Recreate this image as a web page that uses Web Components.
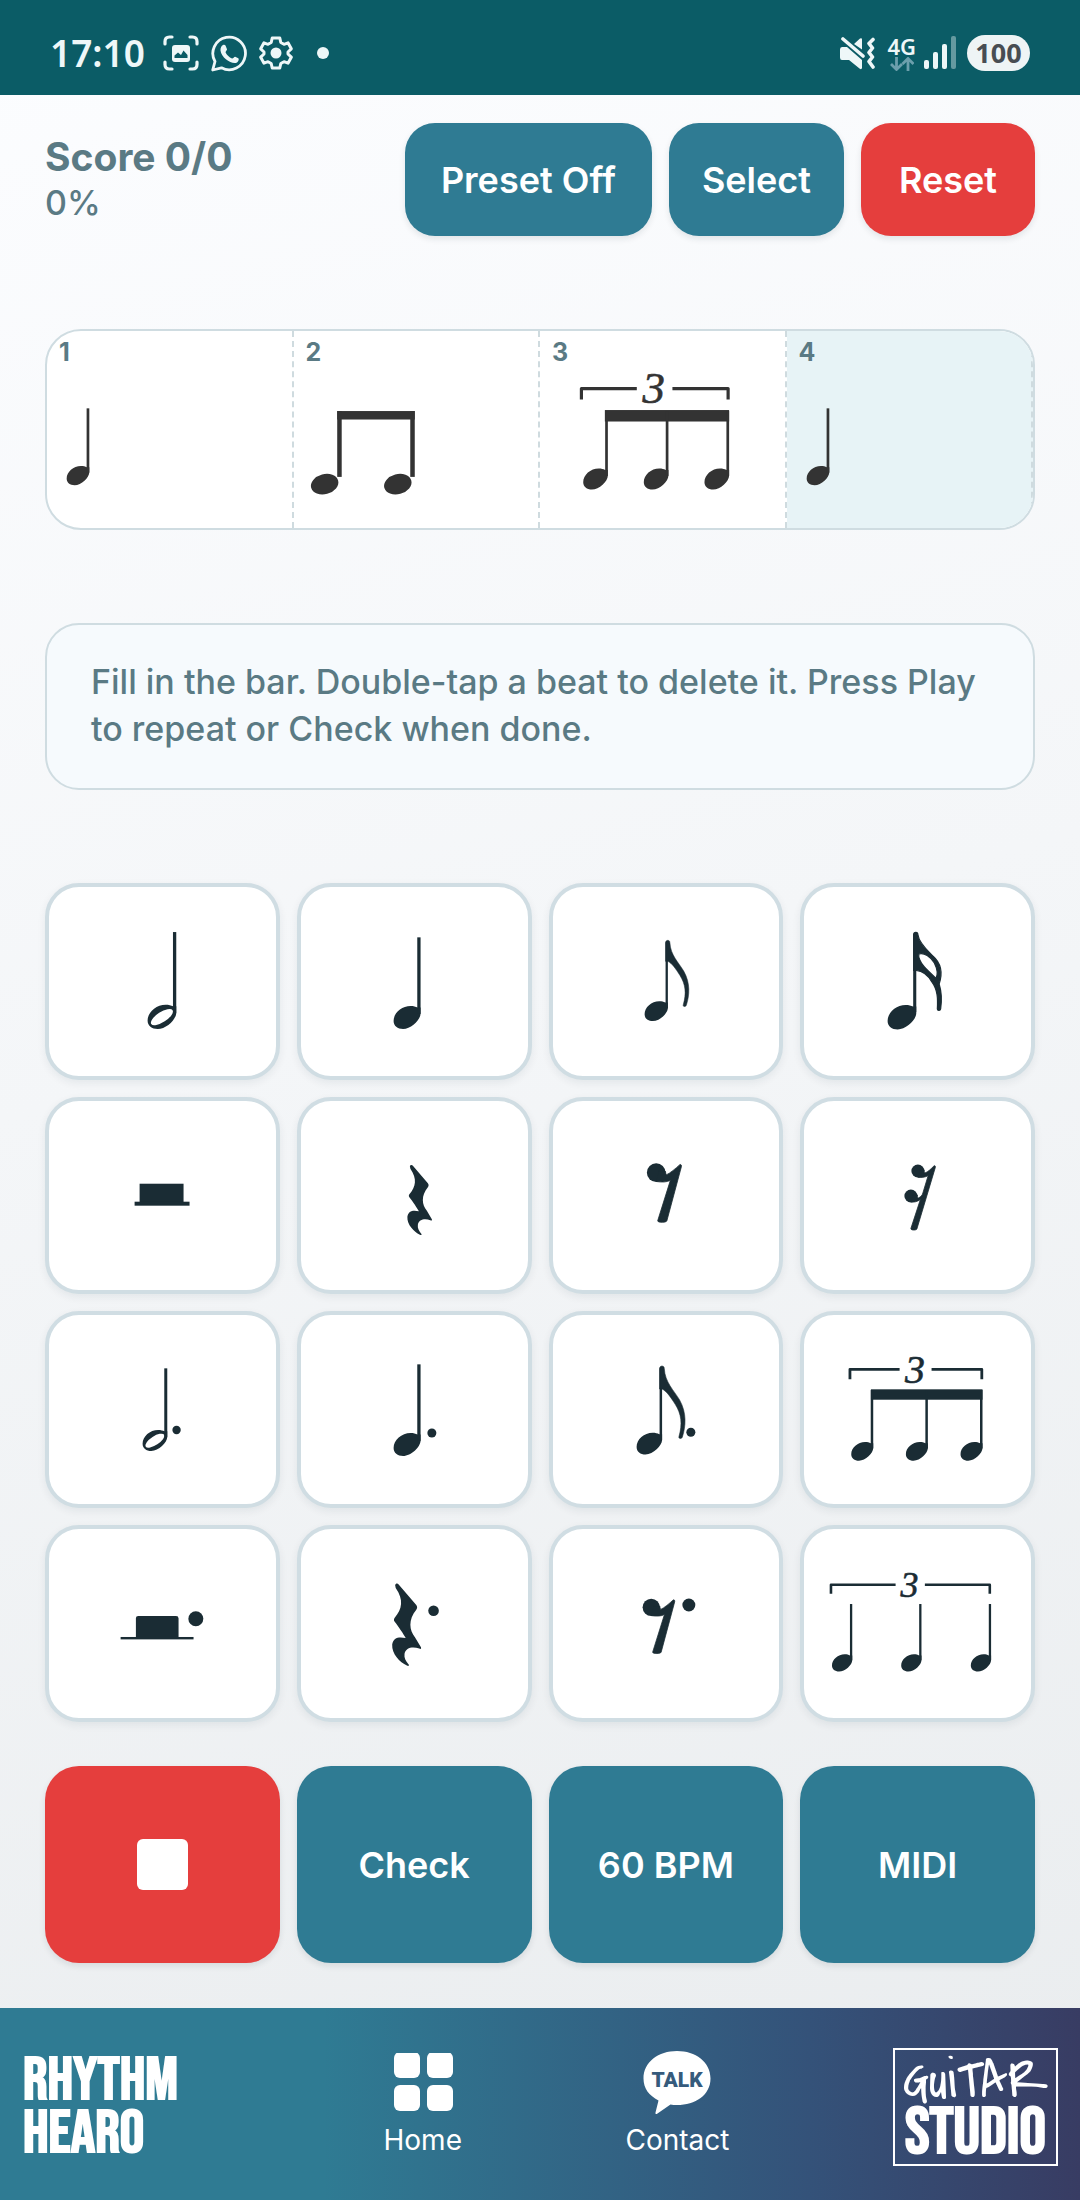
<!DOCTYPE html>
<html lang="en">
<head>
<meta charset="utf-8">
<meta name="viewport" content="width=device-width, initial-scale=1">
<title>Rhythm Hearo</title>
<style>
  html, body { margin: 0; min-height: 100%; }
  body { font-family: Inter, "Liberation Sans", sans-serif; background: #fbfcfe; }
</style>
</head>
<body>
<rhythm-app></rhythm-app>

<script>
const INK = 'currentColor';

/* ---- music notation helpers (all return SVG markup) ---- */
const headShape = 'M27 7.5C27 14 17.500 23 9.500 23C4 23 0 20 0 15C0 7 8 0 17 0C20 0 22 .6 24 1.500L27 1.500Z';
const head = (x, y, w, hollow) =>
  `<g transform="translate(${x} ${y}) scale(${w / 27})"><path d="${headShape}"/>` +
  (hollow ? '<ellipse cx="13.500" cy="11.700" rx="12" ry="4.800" transform="rotate(-33 13.500 11.700)" fill="#fff"/>' : '') + '</g>';
const note = (x, y, w, top, stem, hollow) =>
  head(x, y, w, hollow) + `<rect x="${x + w - stem}" y="${top}" width="${stem}" height="${y + 8 * w / 27 - top}"/>`;
const dot = (x, y, r) => `<circle cx="${x}" cy="${y}" r="${r}"/>`;
const eighth = (x, y, s) => `<g transform="translate(${x} ${y}) scale(${s})">${head(0, 61, 23.3)}
  <rect x="21" y="2" width="2.3" height="66"/>
  <path stroke="${INK}" stroke-width=".5" d="M21 2C21.300 -.7 25.300 -.7 25.300 2.200C26 15 34 22 39.300 31C46 43 45 55 41.800 65C41 67 38 66.500 38.700 64.500C42 53 41 44 35.300 35C31.500 29 27.500 23 23.300 21L21 21Z"/></g>`;
const quarterRest = (x, y, s) => `<path transform="translate(${x} ${y}) scale(${s})" d="M3 1.500C3.500 -.2 5.200 -.2 6 1L21 18.500C22 20 22 21 21 22.500C14 31 15 40 20 46L25 54.500C25.500 56 24.500 56 23.500 55.500C18 53.500 12 54.500 11 60C10.500 63.500 12 66 14 68.500C15.500 70 14.500 70.700 13 70C7 67 0 60 .5 52C1.500 46 6 45.300 12 46.500C10 43 6 37 2.500 32.500C1.800 31.500 1.800 30.500 2.500 29.500C9 22 10.500 14 3.500 4Z"/>`;
const eighthRest = (x, y, s) => `<g transform="translate(${x} ${y}) scale(${s})"><circle cx="9.300" cy="9.300" r="9.300"/>
  <path stroke="${INK}" stroke-width=".8" d="M18.600 8C18.600 9.500 19 10.500 19.500 11.500C23 10 29 5 33 1.300C34.300 .8 34.900 2 34.500 3.500L20 57.500C19.500 59.500 10.500 59.500 10.800 57.500L23.500 17C20 19 15 19 9.300 18.200L12 8Z"/></g>`;
const bracket = (x1, a, b, x2, y, drop, w, cx, base, size) =>
  `<path d="M${x1} ${y + drop}V${y}H${a}M${b} ${y}H${x2}V${y + drop}" fill="none" stroke="${INK}" stroke-width="${w}" stroke-linejoin="round"/>
   <text x="${cx}" y="${base}" font-family="Liberation Serif, serif" font-style="italic" font-size="${size}" stroke="${INK}" stroke-width=".6" text-anchor="middle">3</text>`;

const FIGURES = {
  'half': note(102.7, 121.7, 28.7, 49, 3.3, true),
  'quarter': note(96.7, 123, 27, 54.3, 3.3),
  'eighth': eighth(95.7, 57.3, 1),
  'sixteenth': head(87.7, 122, 28.7) + `<rect x="113.300" y="51" width="3.100" height="78"/>
    <path fill-rule="evenodd" stroke="${INK}" stroke-width="1.200" d="M113.800 51C114 48.500 118 48.700 118 51.500C119 60 128 68 133 73C141 80 143 90 139.300 101C142 110 142 118 140.800 126C140.500 128 137.500 128 137.500 126C138 116 138 107 132 99C128 92 122 88 116.300 87.500L113.800 87.500ZM119 71C124 69 131 74 134.500 80C138 87 138 92 136 95.500C133 92 128 88 124.500 84C121 80 118 74 119 71Z"/>`,
  'half rest': '<rect x="94.700" y="86.700" width="44" height="19"/><rect x="89.700" y="104.700" width="55" height="4"/>',
  'quarter rest': quarterRest(110, 67.7, 1),
  'eighth rest': eighthRest(98, 66.3, 1),
  'sixteenth rest': dot(118, 74, 6.5) + dot(111, 99, 6.5) +
    `<path stroke="${INK}" stroke-width=".8" d="M124.300 73C124 74.500 124.500 75.500 125 76C128 75 131 72 134 69C135 68 136 69 135.300 71L117 132C116.500 133.500 110.500 133.500 111 131.500L120.500 102.500C117 105 114 105.300 111 105L113 98L117.500 98C117.300 100 117.700 101 118.500 101C121 100 122.500 98 123 96L128.300 78.500C125 80.500 121 80.800 118 80.200L120 73Z"/>`,
  'dotted half': note(97.7, 119, 24.7, 57.3, 3, true) + dot(131.7, 119, 4.2),
  'dotted quarter': note(96.7, 122, 27, 53.3, 3.3) + dot(135, 122, 4.5),
  'dotted eighth': eighth(87.7, 55, 1.095) + dot(142, 121.3, 4.5),
  'eighth triplet': bracket(50, 99.700, 131.700, 182, 58.3, 10, 2.8, 115, 72, 40) +
    '<rect x="71" y="78.300" width="111.700" height="10.400"/>' +
    [51.3, 106, 160.7].map(x => note(x, 131, 22, 79, 2.5)).join(''),
  'dotted half rest': '<rect x="75.700" y="112" width="73" height="2.400"/><rect x="91" y="91" width="42.700" height="23" rx="2.500"/>' + dot(151, 93.7, 7.5),
  'dotted quarter rest': quarterRest(94.7, 58.3, 1.176) + dot(136.7, 85.7, 5.3),
  'dotted eighth rest': eighthRest(93.7, 73.7, .93) + dot(140, 80, 6.5),
  'quarter triplet': bracket(31, 95.700, 125, 190, 59.7, 9, 2.6, 109.700, 72, 36) +
    [32, 101.3, 171].map(x => note(x, 129.3, 20.3, 79, 2.3)).join(''),

  'beat quarter': note(19.7, 135, 22.7, 77.3, 2.7),
  'beat eighth pair': [30.7, 104].map(x => `<ellipse cx="${x}" cy="153.300" rx="14" ry="10" transform="rotate(-15 ${x} 153.300)"/>`).join('') +
    '<rect x="43.300" y="80" width="4.500" height="66"/><rect x="116.500" y="80" width="4.500" height="66"/><rect x="43.300" y="80" width="77.700" height="8.500"/>',
  'beat triplet': bracket(41.5, 97, 132.700, 188.500, 57.5, 11, 3.2, 114, 72, 45) +
    '<rect x="65" y="79" width="124.500" height="11.500"/>' +
    [43.3, 104, 164.8].map(x => note(x, 137.7, 24.7, 80, 2.7)).join('')
};

function define(name, markup, setup) {
  const tpl = document.createElement('template');
  customElements.define(name, class extends HTMLElement {
    connectedCallback() {
      if (this.shadowRoot) return;
      tpl.innerHTML = typeof markup === 'function' ? markup(this) : markup;
      this.attachShadow({ mode: 'open' }).append(tpl.content.cloneNode(true));
      if (setup) setup(this);
    }
  });
}

define('status-bar', `
  <style>
    :host { display: flex; align-items: center; justify-content: space-between; height: 95px; padding: 11px 50px 0;
            box-sizing: border-box; background: #0b5c66; color: #eef7f8; font-family: "Noto Sans", "Open Sans", sans-serif; }
    .group { display: flex; align-items: center; gap: 12px; }
    time { font-size: 37px; font-weight: 600; line-height: 40px; padding-right: 6px; }
    svg { display: block; flex: none; }
    .net { display: flex; flex-direction: column; align-items: center; font: 600 22px/20px "Noto Sans", sans-serif; gap: 1px; }
    .right { gap: 8px; }
    .mute { padding-right: 4px; }
    .battery { background: #eef4f5; color: #484d52; border-radius: 18px; font: 700 27px/36px "Open Sans", sans-serif; width: 63px; text-align: center; margin-left: 3px; }
  </style>
  <div class="group">
    <time>17:10</time>
    <svg width="36" height="36" viewBox="0 0 36 36" fill="none" stroke="currentColor" stroke-width="3.200" stroke-linecap="round">
      <path d="M2 9V6.500Q2 2 6.500 2H9M27 2H29.500Q34 2 34 6.500V9M34 27V29.500Q34 34 29.500 34H27M9 34H6.500Q2 34 2 29.500V27"/>
      <rect x="9" y="10" width="18" height="17" rx="3" fill="currentColor" stroke="none"/>
      <path d="M11.500 23V20.500L15 17.500L18 20L20.500 15.500L24.500 20V23Z" fill="#0b5c66" stroke="none"/>
    </svg>
    <svg width="36" height="37" viewBox="0 0 36 37" fill="none" stroke="currentColor" stroke-width="2.800">
      <path d="M1.700 35L4 26.500A16.300 16.300 0 1 1 10.500 32.800Z" stroke-linejoin="round"/>
      <path d="M12 10C13 9.400 14 9.600 14.500 10.600L16 14.200C16.300 15 14.300 16.600 14.600 17.500C16 20.300 18.200 22.300 21 23.400C22 23.700 23.300 21.400 24.200 21.700L27.300 23.300C28.300 24 27.500 26.500 26 27.500C21.500 30 10.500 23.500 9.500 15.500C9.300 13 10.500 10.800 12 10Z" fill="currentColor" stroke="none"/>
    </svg>
    <svg width="34" height="34" viewBox="0 0 34 34" fill="none" stroke="currentColor" stroke-width="3" stroke-linejoin="round">
      <path d="M13.200 2H20.800L21.800 6.500L25 8.300L29 6.800L32.300 12.800L29 16V18L32.300 21.200L29 27.200L25 25.700L21.800 27.500L20.800 32H13.200L12.200 27.500L9 25.700L5 27.200L1.700 21.200L5 18V16L1.700 12.800L5 6.800L9 8.300L12.200 6.500Z"/>
      <circle cx="17" cy="17" r="5.500" fill="currentColor" stroke="none"/>
    </svg>
    <svg width="30" height="12" viewBox="0 0 30 12"><circle cx="18" cy="6" r="6" fill="currentColor"/></svg>
  </div>
  <div class="group right">
    <svg class="mute" width="36" height="34" viewBox="0 0 36 34" fill="currentColor">
      <path d="M3 11H8L23 24V32Q22.500 34 20.500 32.500L10 24H3Q1 24 1 21.500V13.500Q1 11 3 11ZM15 8L21 2.500Q23 1.500 23 3.500V13.500Z"/>
      <path d="M4 3L24 20M34 3.500L30 7.500L33.500 12L30 16.500L33.500 21L30 25.500L34 31" fill="none" stroke="currentColor" stroke-width="3.600" stroke-linecap="round" stroke-linejoin="round"/>
    </svg>
    <div class="net"><span>4G</span>
      <svg width="24" height="14" viewBox="0 0 24 14" fill="none" stroke="#6c9fac" stroke-width="2.800"><path d="M6.500 0V12M1 7L6.500 12.500L12 7M18 14V2M12.500 7L18 1.500L23.500 7"/></svg>
    </div>
    <svg width="32" height="34" viewBox="0 0 32 34" fill="currentColor">
      <rect x="0" y="24" width="5" height="9" rx="2"/><rect x="9" y="16" width="5" height="17" rx="2"/><rect x="18" y="8" width="5" height="25" rx="2"/><rect x="27" y="0" width="5" height="33" rx="2" opacity=".4"/>
    </svg>
    <span class="battery">100</span>
  </div>`);

define('app-button', `
  <style>
    :host { display: block; --fill: #2f7b93; }
    :host([tone="danger"]) { --fill: #e53e3d; }
    button { display: flex; align-items: center; justify-content: center; width: 100%; min-width: 174px; height: 113px; padding: 0 33px; border: 0;
             border-radius: 30px; background: var(--fill); color: #fff; font: 600 36px/44px Inter, sans-serif; white-space: nowrap;
             box-shadow: 0 3px 6px rgba(20, 40, 50, .1); cursor: pointer; }
    :host([size="wide"]) button { padding: 0 36px; }
    :host([size="large"]) button { min-width: 0; height: 197px; padding: 0 8px; border-radius: 34px; }
  </style>
  <button type="button"><slot></slot></button>`,
  el => { if (el.hasAttribute('label')) el.shadowRoot.querySelector('button').setAttribute('aria-label', el.getAttribute('label')); });

define('score-board', `
  <style>
    :host { display: block; color: #5a7a84; }
    .score { font-size: 39px; font-weight: 700; line-height: 46px; }
    .percent { font-size: 34px; font-weight: 500; line-height: 46px; }
  </style>
  <div class="score"><slot name="score"></slot></div>
  <div class="percent"><slot name="percent"></slot></div>`);

define('beat-cell', el => `
  <style>
    :host { display: grid; flex: 1 1 0; min-width: 0; border-right: 2px dashed #cfdbdf; color: #333; }
    :host([active]) { background: #e7f3f6; }
    span, svg { grid-area: 1 / 1; }
    span { padding: 9px 12px; font-size: 25px; font-weight: 700; line-height: 24px; color: #5a7a84; }
    svg { display: block; width: 100%; height: 197px; fill: currentColor; }
  </style>
  <span><slot></slot></span>
  <svg viewBox="0 0 245 197" preserveAspectRatio="xMinYMid meet" role="img" aria-label="${el.getAttribute('figure')}">${FIGURES[el.getAttribute('figure')]}</svg>`);

define('beat-bar', `
  <style>
    :host { display: flex; background: #fff; border: 2px solid #cfdce1; border-radius: 36px; overflow: hidden; }
  </style>
  <slot></slot>`);

define('hint-box', `
  <style>
    :host { display: block; padding: 33px 44px 36px; border: 2px solid #cfdce1; border-radius: 34px; background: #f6fafd; color: #5a7a84; }
    p { margin: 0; font-size: 34px; font-weight: 500; line-height: 47px; }
  </style>
  <p><slot></slot></p>`);

define('note-key', el => `
  <style>
    :host { display: block; min-width: 0; }
    button { display: block; width: 100%; height: 197px; padding: 0; border: 4px solid #d0dde3; border-radius: 34px; background: #fff;
             color: #1a2c34; box-shadow: 0 3px 8px rgba(20, 40, 50, .07); cursor: pointer; }
    svg { display: block; width: 100%; height: 100%; fill: currentColor; }
  </style>
  <button type="button" aria-label="${el.getAttribute('figure')}"><svg viewBox="4 4 227 189" aria-hidden="true">${FIGURES[el.getAttribute('figure')]}</svg></button>`);

define('nav-item', el => `
  <style>
    :host { display: block; }
    a { display: flex; flex-direction: column; align-items: center; gap: 7px; color: #fff; text-decoration: none; font-size: 28px; line-height: 40px; }
    ::slotted(svg) { display: block; }
  </style>
  <a href="#${el.getAttribute('to')}"><slot name="icon"></slot><slot></slot></a>`);

define('nav-bar', `
  <style>
    :host { display: flex; align-items: center; justify-content: space-between; height: 192px; box-sizing: border-box; padding: 5px 22px 0;
            background: linear-gradient(to right, #2f7b93 30%, #345279 75%, #383c63); color: #fff; }
    .brand { width: 198px; font: 700 61px/53px "Bebas Neue", "Liberation Sans Narrow", sans-serif; }
    .brand div { padding-left: 1px; }
    .studio { display: flex; flex-direction: column; align-items: center; justify-content: center; width: 165px; height: 118px; box-sizing: border-box;
              border: 2px solid #fff; color: #fff; text-decoration: none; }
    .script { font: 400 54px/54px "Rock Salt", "Covered By Your Grace", "Reenie Beanie", "Permanent Marker", "Caveat Brush", Caveat, Kalam, "Patrick Hand", "Comic Neue", cursive; }
    .block { font: 700 66px/52px "Bebas Neue", "Liberation Sans Narrow", sans-serif; }
  </style>
  <div class="brand"><div>RHYTHM</div><div>HEARO</div></div>
  <nav-item to="home">
    <svg slot="icon" width="60" height="60" viewBox="0 0 60 60" fill="#fff"><rect x="1" y="-1" width="26" height="26" rx="6"/><rect x="34" y="-1" width="26" height="26" rx="6"/><rect x="1" y="32" width="26" height="26" rx="6"/><rect x="34" y="32" width="26" height="26" rx="6"/></svg>Home
  </nav-item>
  <nav-item to="contact">
    <svg slot="icon" width="68" height="60" viewBox="0 0 68 60" overflow="visible"><path d="M34 -2C52.500 -2 67.500 9 67.500 25.500S52.500 52 34 52C31.500 52 29.500 51.700 27.500 51.400L14.500 60.500Q12 62 12.500 59.500L15.500 47.500C6 42.500 .5 35.500 .5 25.500C.5 9 15.500 -2 34 -2Z" fill="#fff"/><text x="34" y="34" text-anchor="middle" fill="#365b7c" font-family="Roboto, sans-serif" font-size="21" font-weight="900">TALK</text></svg>Contact
  </nav-item>
  <a class="studio" href="#studio"><span class="script">GuiTAR</span><span class="block">STUDIO</span></a>`);

define('rhythm-app', `
  <style>
    :host { display: block; background: linear-gradient(165deg, #fcfdff, #f4f6f8 45%, #e9ecee); }
    main { display: flex; flex-direction: column; gap: 93px; padding: 28px 45px 45px; }
    header { display: flex; align-items: center; justify-content: space-between; }
    .actions { display: flex; gap: 17px; }
    .keys { display: grid; grid-template-columns: repeat(4, minmax(0, 1fr)); gap: 17px; }
    .pad { display: flex; flex-direction: column; gap: 44px; }
    .stop { width: 51px; height: 51px; border-radius: 6px; background: #fff; }
  </style>
  <status-bar></status-bar>
  <main>
    <header>
      <score-board><span slot="score">Score 0/0</span><span slot="percent">0%</span></score-board>
      <div class="actions"><app-button size="wide">Preset Off</app-button><app-button>Select</app-button><app-button tone="danger">Reset</app-button></div>
    </header>
    <beat-bar>
      <beat-cell figure="beat quarter">1</beat-cell><beat-cell figure="beat eighth pair">2</beat-cell><beat-cell figure="beat triplet">3</beat-cell><beat-cell figure="beat quarter" active>4</beat-cell>
    </beat-bar>
    <hint-box>Fill in the bar. Double-tap a beat to delete it. Press Play to repeat or Check when done.</hint-box>
    <div class="pad">
      <div class="keys">
        <note-key figure="half"></note-key><note-key figure="quarter"></note-key><note-key figure="eighth"></note-key><note-key figure="sixteenth"></note-key>
        <note-key figure="half rest"></note-key><note-key figure="quarter rest"></note-key><note-key figure="eighth rest"></note-key><note-key figure="sixteenth rest"></note-key>
        <note-key figure="dotted half"></note-key><note-key figure="dotted quarter"></note-key><note-key figure="dotted eighth"></note-key><note-key figure="eighth triplet"></note-key>
        <note-key figure="dotted half rest"></note-key><note-key figure="dotted quarter rest"></note-key><note-key figure="dotted eighth rest"></note-key><note-key figure="quarter triplet"></note-key>
      </div>
      <div class="keys">
        <app-button size="large" tone="danger" label="Stop"><span class="stop"></span></app-button>
        <app-button size="large">Check</app-button><app-button size="large">60 BPM</app-button><app-button size="large">MIDI</app-button>
      </div>
    </div>
  </main>
  <nav-bar></nav-bar>`);
</script>
</body>
</html>
